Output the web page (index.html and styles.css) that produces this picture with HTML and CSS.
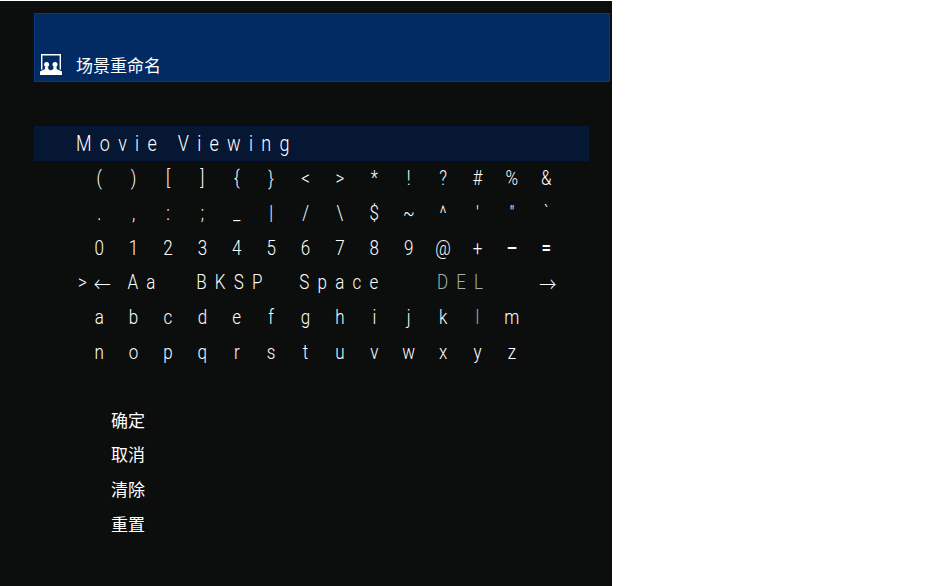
FILE: index.html
```html
<!DOCTYPE html>
<html lang="zh-CN">
<head>
<meta charset="UTF-8" />
<title>场景重命名</title>
<link rel="stylesheet" href="styles.css">
</head>
<body>
<div class="screen">
  <div class="header">
    <svg class="header-icon" width="22" height="22" viewBox="0 0 22 22" aria-hidden="true">
      <path d="M1.700 15.500V0.800h18.600V15.500" fill="none" stroke="#fff" stroke-width="1.400" />
      <circle cx="6.600" cy="10.500" r="2.500" fill="#fff" />
      <circle cx="15" cy="10.500" r="2.500" fill="#fff" />
      <path d="M0 21v-3.500l2-1 3-1.500v-2h3.200v2l2.600 1.500 2.600-1.500v-2h3.200v2l3.400 1.500 2 1v3.500z" fill="#fff" />
    </svg>
    <span class="header-title">场景重命名</span>
  </div>

  <div class="name-input"><span>Movie Viewing</span></div>

  <div class="keys">
    <span>(</span><span>)</span><span>[</span><span>]</span><span>{</span><span>}</span><span>&lt;</span><span>&gt;</span><span>*</span><span>!</span><span>?</span><span>#</span><span>%</span><span>&amp;</span>
    <span>.</span><span>,</span><span>:</span><span>;</span><span>_</span><span>|</span><span>/</span><span>\</span><span>$</span><span>~</span><span>^</span><span>'</span><span>"</span><span>`</span>
    <span>0</span><span>1</span><span>2</span><span>3</span><span>4</span><span>5</span><span>6</span><span>7</span><span>8</span><span>9</span><span>@</span><span>+</span><span class="bold">–</span><span class="bold">=</span>
    <span class="key-back"><i>&gt;</i>←</span>
    <span class="wide span2">Aa</span>
    <span class="wide span3">BKSP</span>
    <span class="wide span4">Space</span>
    <span class="wide span3 dim">DEL</span>
    <span class="key-next">→</span>
    <span>a</span><span>b</span><span>c</span><span>d</span><span>e</span><span>f</span><span>g</span><span>h</span><span>i</span><span>j</span><span>k</span><span class="dim">l</span><span>m</span><span></span>
    <span>n</span><span>o</span><span>p</span><span>q</span><span>r</span><span>s</span><span>t</span><span>u</span><span>v</span><span>w</span><span>x</span><span>y</span><span>z</span><span></span>
  </div>

  <ul class="menu">
    <li>确定</li>
    <li>取消</li>
    <li>清除</li>
    <li>重置</li>
  </ul>
</div>
</body>
</html>
```

FILE: styles.css
```css
* {
  box-sizing: border-box;
}
body {
  margin: 0;
  background: #fff;
  font-family: Roboto, "Noto Sans CJK SC", sans-serif;
  color: #fff;
}
.screen {
  width: 612px;
  height: 585px;
  margin-top: 1px;
  padding: 12px 2px 0 34px;
  background: #0c0e0e;
  overflow: hidden;
}
.header {
  display: flex;
  align-items: center;
  gap: 14px;
  height: 69px;
  padding: 40px 0 5px 6px;
  background: #022a63;
  border: 1px solid #083a84;
}
.header-icon {
  flex: none;
  margin-left: -1px;
}
.header-title {
  font-family: "Noto Sans CJK SC", sans-serif;
  font-size: 17px;
  line-height: 20px;
}
.name-input {
  width: 555px;
  height: 35px;
  margin-top: 44px;
  padding-left: 41px;
  background: #061734;
  border: 1px solid #06183a;
  font-size: 18px;
  font-weight: 300;
  line-height: 33px;
  letter-spacing: 8.3px;
  white-space: nowrap;
}
.name-input span {
  display: inline-block;
  transform: scaleY(1.2);
}
.keys {
  display: grid;
  grid-template-columns: repeat(14, 34.4px);
  grid-auto-rows: 34.8px;
  margin-left: 48px;
  font-size: 17px;
  font-weight: 300;
}
.keys span {
  display: flex;
  align-items: center;
  justify-content: center;
  transform: scaleY(1.2);
}
.keys .wide {
  justify-content: flex-start;
  padding-left: 11px;
  letter-spacing: 8.2px;
}
.keys .span2 {
  grid-column: span 2;
}
.keys .span3 {
  grid-column: span 3;
}
.keys .span4 {
  grid-column: span 4;
}
.keys .key-back {
  justify-content: flex-start;
  gap: 7px;
  margin-left: -4px;
}
.keys .key-next {
  padding-left: 3px;
}
.key-back i {
  font-style: normal;
  font-size: 17px;
}
.keys .dim {
  color: #9db3aa;
}
.keys .bold {
  font-weight: 500;
}
.menu {
  margin: 33px 0 0 77px;
  padding: 0;
  list-style: none;
  font-family: "Noto Sans CJK SC", sans-serif;
  font-size: 17px;
}
.menu li {
  height: 34.6px;
  line-height: 34.6px;
}
```
